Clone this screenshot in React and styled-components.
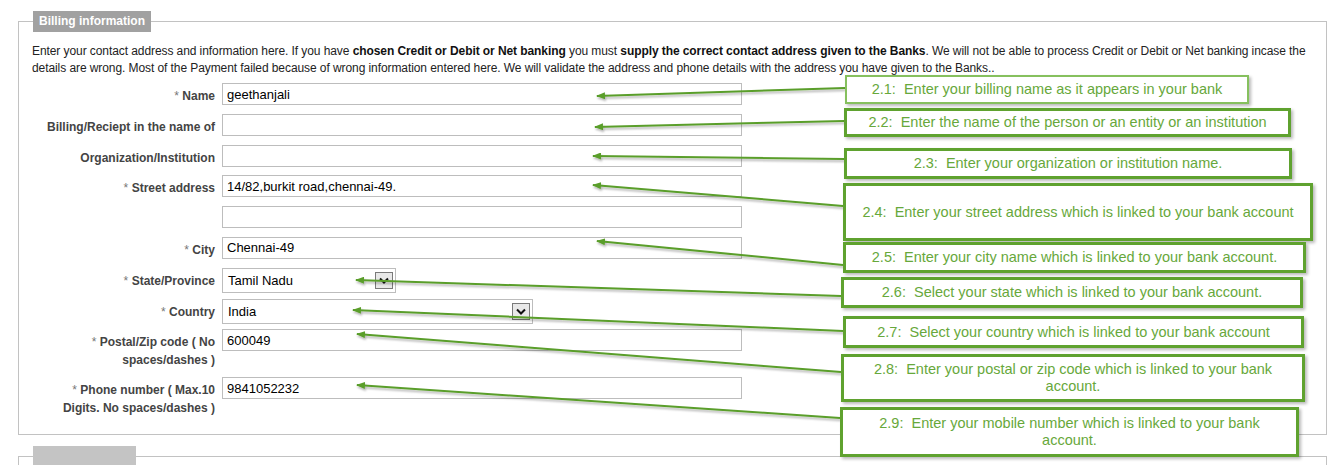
import React from 'react'
import styled, { createGlobalStyle } from "styled-components"

const GlobalStyle = createGlobalStyle`
  html, body {
    margin: 0;
    padding: 0;
    background: #fff;
    overflow: hidden;
  }
  body {
    font-family: "Liberation Sans", Arial, sans-serif;
  }
`;

const Page = styled.div`
  position: relative;
  width: 1340px;
  height: 465px;
  overflow: hidden;
  padding-top: 11px;
  box-sizing: border-box;
`;

const Fieldset = styled.fieldset`
  margin: ${props => props.$top || 0}px 13px 0 18px;
  padding: 0 13px ${props => props.$bottom || 0}px 13px;
  border: 1px solid #c2c2c2;
  min-width: 0;
  min-height: ${props => props.$minHeight || 0}px;
`;

const Legend = styled.legend`
  margin-left: 1px;
  padding: 3px 6px;
  width: ${props => props.$width ? props.$width + 'px' : 'auto'};
  height: 21px;
  box-sizing: border-box;
  background: ${props => props.$muted ? '#c4c4c4' : '#a1a1a1'};
  color: #fff;
  font-size: 12px;
  font-weight: bold;
  line-height: 15px;
`;

const Intro = styled.p`
  margin: 11px 0 0;
  font-size: 12px;
  line-height: 17px;
  letter-spacing: -0.08px;
  color: #222;

  b {
    font-weight: bold;
    color: #111;
  }
`;

const Form = styled.div`
  display: grid;
  grid-template-columns: 175px 520px;
  grid-auto-rows: minmax(30.8px, auto);
  column-gap: 7px;
  align-items: start;
  margin: 6px 0 0 8px;
`;

const Label = styled.label`
  padding: 4px 0 8px;
  text-align: right;
  font-size: 12px;
  font-weight: bold;
  line-height: 18px;
  color: #444;
`;

const Req = styled.span`
  color: #777;
  font-weight: normal;
`;

const TextInput = styled.input`
  width: 520px;
  height: 22px;
  box-sizing: border-box;
  margin: 0;
  padding: 0 4px;
  border: 1px solid #bdbdbd;
  font-family: "Liberation Sans", Arial, sans-serif;
  font-size: 13px;
  color: #000;
  outline: none;
`;

const SelectBox = styled.div`
  width: ${props => props.$width}px;
  height: 25px;
  box-sizing: border-box;
  border: 1px solid #bdbdbd;
  display: flex;
  align-items: center;
  justify-content: space-between;
  padding: 0 2px 0 5px;
  font-size: 13px;
  color: #000;
  background: #fff;
`;

const DropButton = styled.span`
  width: 18px;
  height: 17px;
  box-sizing: border-box;
  border: 1px solid #7a7a7a;
  background: #e8e8e8;
  display: flex;
  align-items: center;
  justify-content: center;
`;

const Overlay = styled.svg`
  position: absolute;
  left: 0;
  top: 0;
  pointer-events: none;
`;

const Callout = styled.div`
  position: absolute;
  left: ${props => props.$x}px;
  top: ${props => props.$y}px;
  width: ${props => props.$w}px;
  height: ${props => props.$h}px;
  box-sizing: border-box;
  display: flex;
  align-items: center;
  justify-content: center;
  padding: 0 12px;
  background: #fff;
  border: ${props => props.$light ? '2px solid #86c05e' : '3px solid #5fa22f'};
  box-shadow: 2px 2px 3px rgba(0, 0, 0, 0.28);
  color: #67a83b;
  font-size: 14.5px;
  line-height: 17px;
  text-align: center;
`;

const Chevron = () => (
  <svg width="10" height="7" viewBox="0 0 10 7">
    <path d="M1 1.5 L5 5.5 L9 1.5" fill="none" stroke="#111" strokeWidth="2" />
  </svg>
);

const Select = ({ width, value }) => (
  <SelectBox $width={width}>
    <span>{value}</span>
    <DropButton><Chevron /></DropButton>
  </SelectBox>
);

const rows = [
  { label: 'Name', req: true, value: 'geethanjali' },
  { label: 'Billing/Reciept in the name of', value: '' },
  { label: 'Organization/Institution', value: '' },
  { label: 'Street address', req: true, value: '14/82,burkit road,chennai-49.' },
  { label: '', value: '' },
  { label: 'City', req: true, value: 'Chennai-49' },
  { label: 'State/Province', req: true, select: 174, value: 'Tamil Nadu' },
  { label: 'Country', req: true, select: 311, value: 'India' },
  { label: 'Postal/Zip code ( No spaces/dashes )', req: true, value: '600049' },
  { label: 'Phone number ( Max.10 Digits. No spaces/dashes )', req: true, value: '9841052232' },
];

const notes = [
  { x: 845, y: 75, w: 404, h: 29, light: true, text: 'Enter your billing name as it appears in your bank', from: [845, 88], to: [597, 96] },
  { x: 844, y: 108, w: 447, h: 29, text: 'Enter the name of the person or an entity or an institution', from: [844, 121], to: [595, 127] },
  { x: 844, y: 148, w: 448, h: 31, text: 'Enter your organization or institution name.', from: [844, 159], to: [593, 156] },
  { x: 843, y: 183, w: 470, h: 58, text: 'Enter your street address which is linked to your bank account', from: [843, 206], to: [593, 185] },
  { x: 843, y: 242, w: 463, h: 31, text: 'Enter your city name which is linked to your bank account.', from: [843, 265], to: [597, 241] },
  { x: 841, y: 277, w: 462, h: 31, text: 'Select your state which is linked to your bank account.', from: [841, 296], to: [356, 280] },
  { x: 843, y: 316, w: 461, h: 32, text: 'Select your country which is linked to your bank account', from: [843, 331], to: [353, 310] },
  { x: 841, y: 354, w: 464, h: 48, text: 'Enter your postal or zip code which is linked to your bank account.', from: [841, 372], to: [357, 334] },
  { x: 840, y: 407, w: 459, h: 50, text: 'Enter your mobile number which is linked to your bank account.', from: [840, 418], to: [357, 385] },
];

const App = () => {
  return (
    <>
      <GlobalStyle />
      <Page>
        <Fieldset $bottom={9}>
          <Legend>Billing information</Legend>
          <Intro>
            Enter your contact address and information here. If you have <b>chosen Credit or Debit or Net banking</b> you
            must <b>supply the correct contact address given to the Banks</b>. We will not be able to process Credit or
            Debit or Net banking incase the details are wrong. Most of the Payment failed because of wrong information
            entered here. We will validate the address and phone details with the address you have given to the Banks..
          </Intro>
          <Form>
            {rows.map((r, i) => (
              <React.Fragment key={i}>
                <Label>
                  {r.req && <Req>* </Req>}
                  {r.label}
                </Label>
                {r.select
                  ? <Select width={r.select} value={r.value} />
                  : <TextInput readOnly value={r.value} />}
              </React.Fragment>
            ))}
          </Form>
        </Fieldset>

        <Fieldset $top={11} $minHeight={8}>
          <Legend $muted $width={103}></Legend>
        </Fieldset>

        <Overlay width="1340" height="465" viewBox="0 0 1340 465">
          <defs>
            <marker id="tip" markerWidth="9" markerHeight="7" refX="8" refY="3.5" orient="auto" markerUnits="userSpaceOnUse">
              <path d="M0 0 L9 3.5 L0 7 Z" fill="#5a9e2b" />
            </marker>
            <filter id="shade" x="-5%" y="-50%" width="110%" height="200%">
              <feDropShadow dx="1" dy="2" stdDeviation="1" floodColor="#000" floodOpacity="0.3" />
            </filter>
          </defs>
          <g filter="url(#shade)">
            {notes.map((n, i) => (
              <line
                key={i}
                x1={n.from[0]} y1={n.from[1]} x2={n.to[0]} y2={n.to[1]}
                stroke="#5a9e2b" strokeWidth="2" markerEnd="url(#tip)"
              />
            ))}
          </g>
        </Overlay>

        {notes.map((n, i) => (
          <Callout key={i} $x={n.x} $y={n.y} $w={n.w} $h={n.h} $light={n.light}>
            {`2.${i + 1}:\u00a0 ${n.text}`}
          </Callout>
        ))}
      </Page>
    </>
  )
}

export default App;
